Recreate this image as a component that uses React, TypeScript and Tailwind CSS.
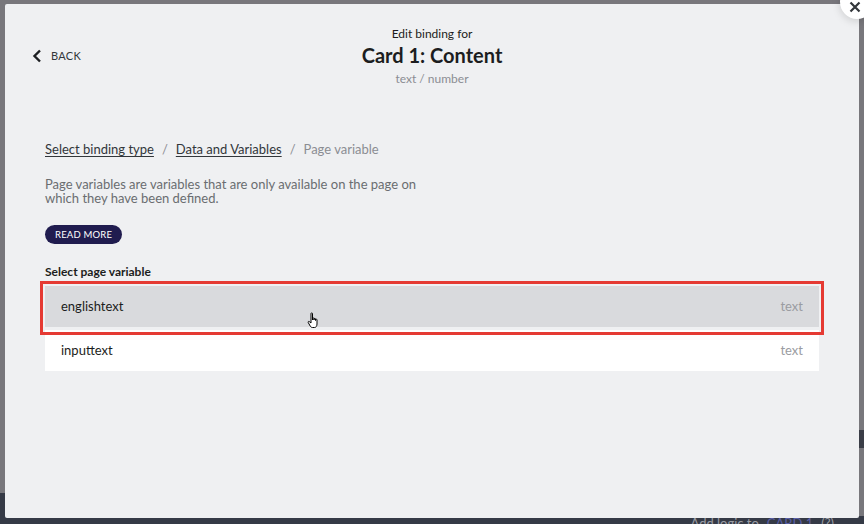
import React from "react";

export default function App() {
  const font = { fontFamily: "Lato, 'Open Sans', sans-serif" };
  return (
    <div className="relative w-[864px] h-[524px] overflow-hidden bg-[#78777c]" style={font}>
      {/* background app */}
      <div className="absolute left-0 top-[493px] w-[10px] h-[31px] bg-[#353a46]" />
      <div className="absolute right-0 top-[430px] w-[10px] h-[18px] bg-[#3a3d47]" />
      <div className="absolute left-0 bottom-0 w-full h-[8px] bg-[#353a46] flex justify-end pr-[30px]">
        <div className="text-[13px] leading-none text-[#9a9ca3] mt-[1px] flex gap-2">
          <span>Add logic to</span>
          <span className="text-[#5a5fa8]">CARD 1</span>
          <span>(?)</span>
        </div>
      </div>

      {/* modal */}
      <div className="absolute left-[5px] top-[4px] w-[854px] h-[514px] bg-[#eff0f2] rounded-[2px]">
        {/* header */}
        <div className="relative h-[120px]">
          <div className="absolute left-[27px] top-[44px] flex items-center gap-[9px] text-[#32363a]">
            <svg width="10" height="14" viewBox="0 0 10 14">
              <path d="M8 1.5 L2.5 7 L8 12.5" fill="none" stroke="#1d1f22" strokeWidth="2.4" />
            </svg>
            <span className="text-[11px] tracking-[0.3px]">BACK</span>
          </div>
          <div className="flex flex-col items-center pt-[21px] text-[#1c1d20]">
            <div className="text-[12px] leading-[17px]">Edit binding for</div>
            <div className="text-[20px] font-bold leading-[26px]">Card 1: Content</div>
            <div className="text-[12px] leading-[16px] text-[#8b8d92] mt-[3px]">text / number</div>
          </div>
        </div>

        {/* body */}
        <div className="px-[40px] pt-[16px]">
          <div className="flex items-center gap-[8px] text-[13px] leading-[18px]">
            <span className="underline underline-offset-2 text-[#32363a]">Select binding type</span>
            <span className="text-[#8b8d92]">/</span>
            <span className="underline underline-offset-2 text-[#32363a]">Data and Variables</span>
            <span className="text-[#8b8d92]">/</span>
            <span className="text-[#8b8d92]">Page variable</span>
          </div>
          <p className="mt-[19px] w-[400px] text-[13px] leading-[14px] text-[#6a6d70]">
            Page variables are variables that are only available on the page on which they have been defined.
          </p>
          <button className="mt-[20px] h-[19px] px-[10px] rounded-full bg-[#201c4f] text-white text-[9.5px] leading-none tracking-[0.2px]">
            READ MORE
          </button>
          <div className="mt-[20px] text-[12px] font-bold leading-[16px] text-[#1c1d20]">Select page variable</div>

          <div className="relative mt-[6px] w-[774px] flex flex-col gap-[3px]">
            <div className="h-[41px] bg-[#d9dadd] flex items-center justify-between px-[16px] text-[13px]">
              <span className="text-[#1c1d20]">englishtext</span>
              <span className="text-[#9a9ca1]">text</span>
            </div>
            <div className="h-[41px] bg-white flex items-center justify-between px-[16px] text-[13px]">
              <span className="text-[#1c1d20]">inputtext</span>
              <span className="text-[#9a9ca1]">text</span>
            </div>
            {/* annotation box */}
            <div className="absolute left-[-5px] top-[-5px] w-[784px] h-[54px] border-[3px] border-[#e53a33] pointer-events-none" />
            {/* cursor */}
            <svg className="absolute left-[262px] top-[26px]" width="14" height="17" viewBox="0 0 14 17">
              <path
                d="M4 1.5 C4 0.7 5.5 0.7 5.5 1.5 L5.5 8 L5.5 6.5 C5.5 5.7 7 5.7 7 6.5 L7 8 L7 7 C7 6.2 8.5 6.2 8.5 7 L8.5 8.5 L8.5 7.8 C8.5 7 10 7 10 7.8 L10 12 C10 14 9 15.5 7.5 15.5 L5.5 15.5 C4.5 15.5 3.8 15 3.2 14 L1.2 10.5 C0.8 9.8 1.6 9 2.3 9.6 L4 11 Z"
                fill="white"
                stroke="black"
                strokeWidth="1"
                strokeLinejoin="round"
              />
            </svg>
          </div>
        </div>
      </div>

      {/* close button */}
      <div className="absolute left-[840px] top-[-15px] w-[34px] h-[34px] rounded-full bg-white shadow-[0_2px_8px_rgba(0,0,0,0.15)] flex items-center justify-center">
        <svg width="12" height="12" viewBox="0 0 12 12" className="mt-[10px] -ml-[4px]">
          <path d="M1.5 1.5 L10.5 10.5 M10.5 1.5 L1.5 10.5" stroke="#32363a" strokeWidth="2.2" />
        </svg>
      </div>
    </div>
  );
}
